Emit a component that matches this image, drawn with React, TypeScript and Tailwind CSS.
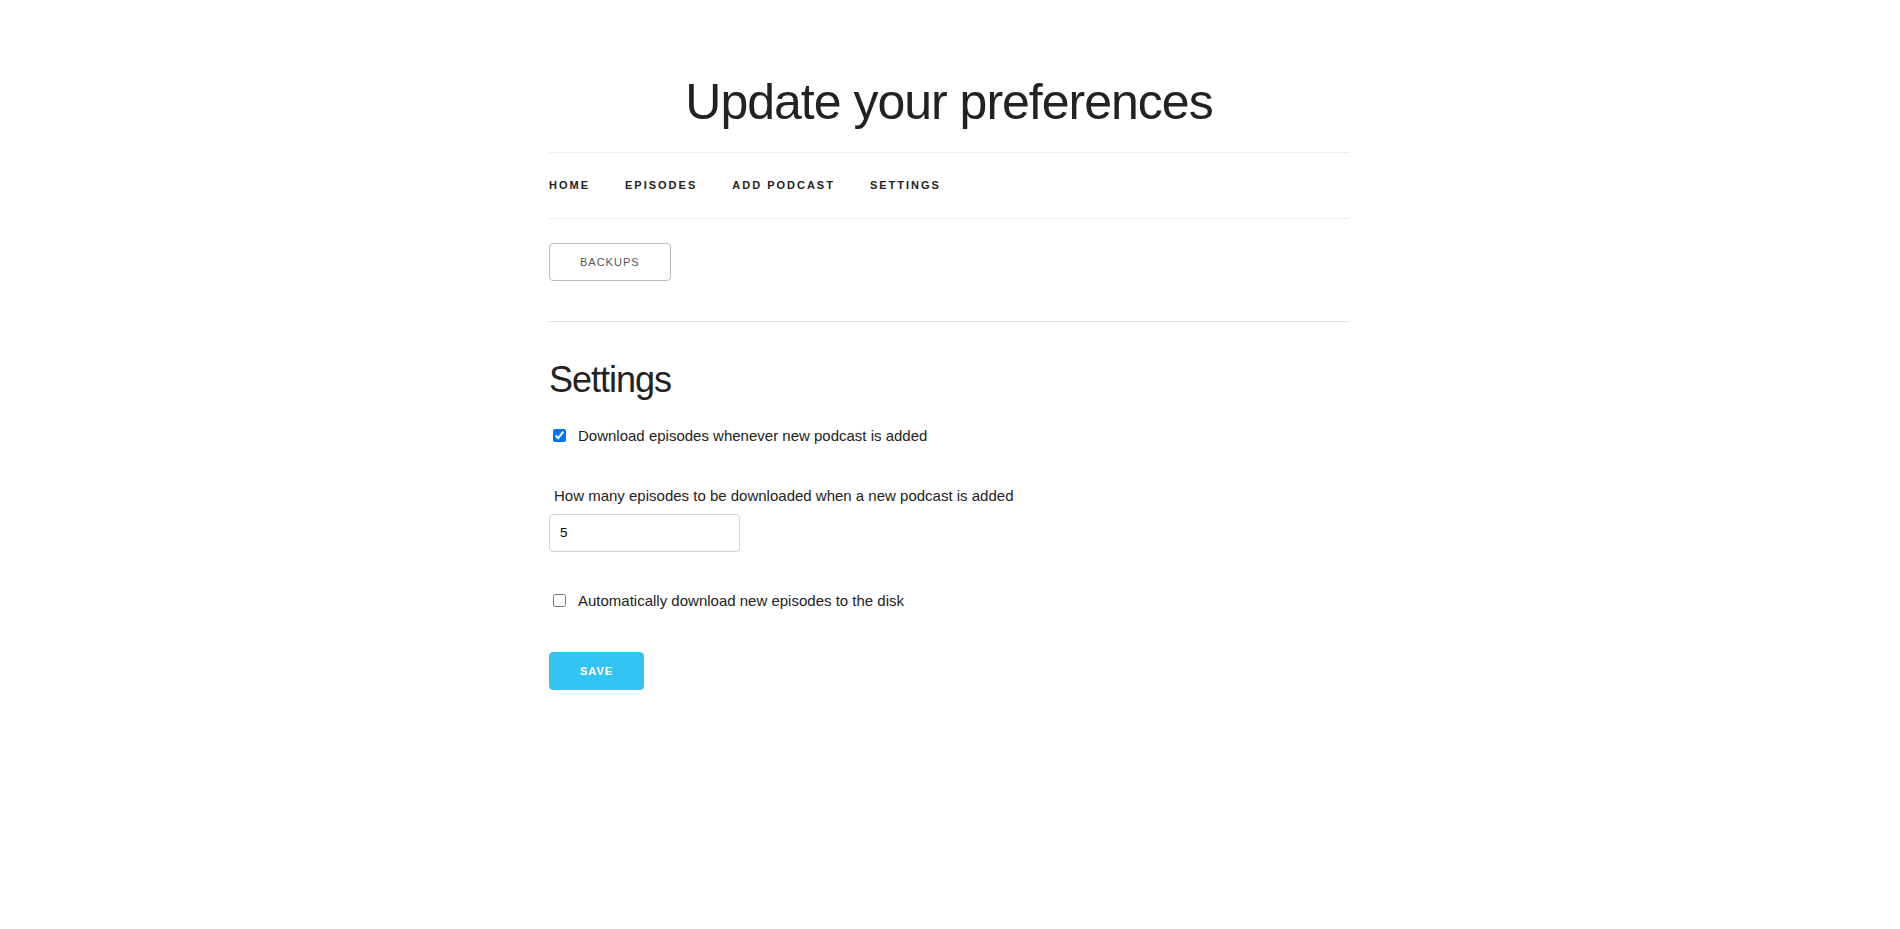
import React, { useState } from 'react';

// Skeleton-style preferences page
const navLinks = ['Home', 'Episodes', 'Add Podcast', 'Settings'];

export default function App() {
    const [downloadOnAdd, setDownloadOnAdd] = useState(true);
    const [episodeCount, setEpisodeCount] = useState('5');
    const [autoDownload, setAutoDownload] = useState(false);

    return (
        <div className="min-h-[929px] bg-white text-[#222] font-['Liberation_Sans',Arial,sans-serif]">
            <div className="w-[802px] pr-[2px] mx-auto pt-[72px]">
                {/* Title */}
                <h1 className="text-center text-[50px] leading-[60px] font-light tracking-[-1px] mb-5">
                    Update your preferences
                </h1>

                {/* Navbar */}
                <nav className="h-[67px] border-y border-[#eee] flex items-center">
                    {navLinks.map((link) => (
                        <a
                            key={link}
                            href="#"
                            className="mr-[35px] text-[11px] font-semibold uppercase tracking-[2px] text-[#222] leading-[65px]"
                        >
                            {link}
                        </a>
                    ))}
                </nav>

                {/* Backups */}
                <div className="mt-6">
                    <button
                        type="button"
                        className="h-[38px] px-[30px] border border-[#bbb] rounded bg-transparent text-[#555] text-[11px] font-normal uppercase tracking-[1px]"
                    >
                        Backups
                    </button>
                </div>

                <hr className="mt-10 mb-[35px] border-0 border-t border-[#e1e1e1]" />

                {/* Settings form */}
                <h3 className="text-[36px] leading-[46.8px] tracking-[-1px] font-light mb-5">Settings</h3>

                <form onSubmit={(e) => e.preventDefault()} className="text-[15px] leading-6">
                    <label className="flex items-center">
                        <input
                            type="checkbox"
                            checked={downloadOnAdd}
                            onChange={(e) => setDownloadOnAdd(e.target.checked)}
                            className="w-[13px] h-[13px] ml-1 mr-[3px] my-[3px]"
                        />
                        <span className="ml-[9px]">Download episodes whenever new podcast is added</span>
                    </label>

                    <label className="block mt-9 pl-[5px]">How many episodes to be downloaded when a new podcast is added</label>
                    <input
                        type="text"
                        value={episodeCount}
                        onChange={(e) => setEpisodeCount(e.target.value)}
                        className="block mt-1.5 w-[191px] h-[38px] px-2.5 py-1.5 border border-[#d1d1d1] rounded text-[13.333px] text-black focus:outline-none focus:border-[#33c3f0]"
                    />

                    <label className="flex items-center mt-[37px]">
                        <input
                            type="checkbox"
                            checked={autoDownload}
                            onChange={(e) => setAutoDownload(e.target.checked)}
                            className="w-[13px] h-[13px] ml-1 mr-[3px] my-[3px]"
                        />
                        <span className="ml-[9px]">Automatically download new episodes to the disk</span>
                    </label>

                    <button
                        type="submit"
                        className="mt-[39px] h-[38px] px-[30px] rounded bg-[#33c3f0] border border-[#33c3f0] text-white text-[11px] font-semibold uppercase tracking-[1px]"
                    >
                        Save
                    </button>
                </form>
            </div>
        </div>
    );
}
